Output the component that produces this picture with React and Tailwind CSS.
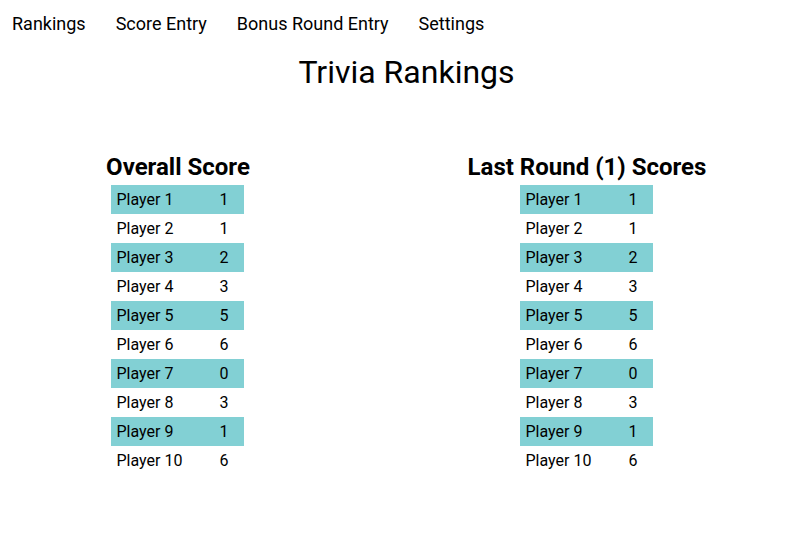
import React from "react";

const overall = [1, 1, 2, 3, 5, 6, 0, 3, 1, 6];
const last = [1, 1, 2, 3, 5, 6, 0, 3, 1, 6];

function Table({ scores }) {
  return (
    <div className="w-[133px] text-[16px] text-black">
      {scores.map((s, i) => (
        <div
          key={i}
          className={`flex h-[29px] items-center ${i % 2 === 0 ? "bg-[#82d0d4]" : "bg-white"}`}
        >
          <div className="w-[109px] pl-[6px]">Player {i + 1}</div>
          <div>{s}</div>
        </div>
      ))}
    </div>
  );
}

export default function App() {
  return (
    <div className="w-[805px] h-[541px] bg-white text-black" style={{ fontFamily: "Roboto, sans-serif" }}>
      <nav className="flex gap-[30px] pl-[12px] pt-[12px] text-[18px] leading-[24px]">
        <span>Rankings</span>
        <span>Score Entry</span>
        <span>Bonus Round Entry</span>
        <span>Settings</span>
      </nav>
      <h1 className="mt-[18px] pl-[8px] text-center text-[32px] leading-[36px]">Trivia Rankings</h1>
      <div className="mt-[63px] flex pl-[107px]">
        <div className="flex w-[142px] flex-col items-center">
          <h2 className="text-[24px] font-bold leading-[28px] whitespace-nowrap">Overall Score</h2>
          <div className="mt-[4px] -ml-[2px]">
            <Table scores={overall} />
          </div>
        </div>
        <div className="ml-[219px] flex w-[238px] flex-col items-center">
          <h2 className="text-[24px] font-bold leading-[28px] whitespace-nowrap">Last Round (1) Scores</h2>
          <div className="mt-[4px] -ml-[2px]">
            <Table scores={last} />
          </div>
        </div>
      </div>
    </div>
  );
}
